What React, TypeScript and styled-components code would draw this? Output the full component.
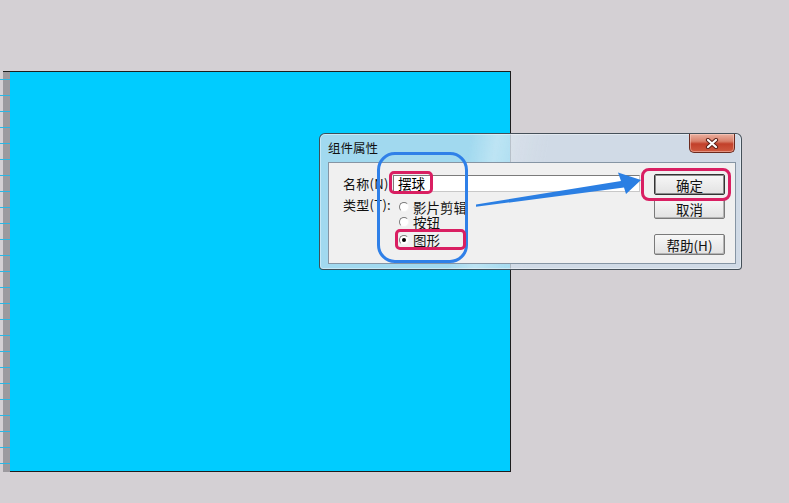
import styled, { createGlobalStyle } from 'styled-components';

const GlobalStyle = createGlobalStyle`
  html, body {
    margin: 0;
    padding: 0;
    background: #d4d0d4;
    font-family: 'Noto Sans CJK SC', 'Liberation Sans', sans-serif;
  }
`;

const RADIOS = [
  { label: '影片剪辑', checked: false },
  { label: '按钮', checked: false },
  { label: '图形', checked: true },
];

const App = () => {
  return (
    <Page>
      <GlobalStyle />
      <CanvasRow>
        <Ruler />
        <Stage />
      </CanvasRow>

      <Window>
        <TitleBar>
          <Title>组件属性</Title>
          <CloseButton>
            <svg width='14' height='11' viewBox='0 0 14 11'>
              <path d='M3 2 L11 9 M11 2 L3 9' stroke='#5b2219' strokeWidth='4.2' strokeLinecap='round' />
              <path d='M3 2 L11 9 M11 2 L3 9' stroke='#ffffff' strokeWidth='2.2' strokeLinecap='round' />
            </svg>
          </CloseButton>
        </TitleBar>
        <Client>
          <Fields>
            <FieldRow>
              <Label>名称(N):</Label>
              <TextBox>摆球</TextBox>
            </FieldRow>
            <FieldRow $top>
              <Label $raise>类型(T):</Label>
              <RadioGroup>
                {RADIOS.map((r, index) => (
                  <RadioRow key={index} $last={index === RADIOS.length - 1}>
                    <RadioCircle>{r.checked && <RadioDot />}</RadioCircle>
                    <span>{r.label}</span>
                  </RadioRow>
                ))}
              </RadioGroup>
            </FieldRow>
          </Fields>
          <ButtonColumn>
            <Button $primary>确定</Button>
            <Button>取消</Button>
            <Button $spaced>帮助(H)</Button>
          </ButtonColumn>
        </Client>
      </Window>

      {/* annotations drawn over the screenshot */}
      <BlueFrame />
      <PinkBox $left={389} $top={171} $w={44} $h={23} />
      <PinkBox $left={395} $top={229} $w={71} $h={21} />
      <PinkBox $left={641} $top={168} $w={90} $h={33} $radius={8} />
      <Arrow width='175' height='40' viewBox='0 0 175 40'>
        <polygon
          points='6,34.5 151,11 148,2.5 171,10 156,24 154,17.5 6,36.8'
          fill='#2b7fe3'
        />
      </Arrow>
    </Page>
  );
};

const Page = styled.div`
  position: relative;
  width: 789px;
  height: 503px;
  box-sizing: border-box;
  padding-top: 71px;
  overflow: hidden;
`;

const CanvasRow = styled.div`
  display: flex;
  width: 511px;
  height: 401px;
`;

const Ruler = styled.div`
  width: 10px;
  background:
    linear-gradient(#1d1d1d, #1d1d1d) 3px 0 / 7px 1px no-repeat,
    repeating-linear-gradient(
      180deg,
      transparent 0 8px,
      #2ab7e6 8px 9px,
      transparent 9px 16px
    ),
    linear-gradient(90deg, transparent 0 3px, #9c9a9f 3px 10px);
`;

const Stage = styled.div`
  flex: 1;
  background: #00ccff;
  border-top: 1px solid #1d1d1d;
  border-right: 1px solid #1d1d1d;
  border-bottom: 1px solid #1d1d1d;
`;

const Window = styled.div`
  position: absolute;
  left: 319px;
  top: 133px;
  width: 423px;
  height: 137px;
  box-sizing: border-box;
  display: flex;
  flex-direction: column;
  padding: 0 5px 5px 8px;
  border: 1px solid rgba(45, 55, 65, 0.85);
  border-radius: 6px 6px 4px 4px;
  background:
    linear-gradient(
      100deg,
      transparent 34%,
      rgba(255, 255, 255, 0.3) 40%,
      rgba(255, 255, 255, 0.1) 46%,
      transparent 52%
    ),
    rgba(206, 220, 234, 0.78);
  box-shadow: inset 0 0 0 1px rgba(255, 255, 255, 0.4);
`;

const TitleBar = styled.div`
  display: flex;
  align-items: flex-start;
  height: 28px;
  flex-shrink: 0;
`;

const Title = styled.span`
  margin-top: 7px;
  font-size: 12.5px;
  line-height: 14px;
  color: #111;
`;

const CloseButton = styled.div`
  margin-left: auto;
  margin-right: 1px;
  width: 46px;
  height: 19px;
  box-sizing: border-box;
  display: flex;
  align-items: center;
  justify-content: center;
  border: 1px solid #6b2a1e;
  border-top: none;
  border-radius: 0 0 5px 5px;
  background: linear-gradient(
    180deg,
    #eab0a0 0%,
    #d9806a 40%,
    #c2402a 55%,
    #cf5a40 100%
  );
  box-shadow: inset 0 0 0 1px rgba(255, 220, 210, 0.45);
`;

const Client = styled.div`
  flex: 1;
  display: flex;
  background: #f0f0f0;
  border: 1px solid #8695a4;
`;

const Fields = styled.div`
  display: flex;
  flex-direction: column;
  padding: 12px 0 0 14px;
`;

const FieldRow = styled.div<{ $top?: boolean }>`
  display: flex;
  align-items: ${(p) => (p.$top ? 'flex-start' : 'center')};
  margin-top: ${(p) => (p.$top ? '7px' : '0')};
`;

const Label = styled.span<{ $raise?: boolean }>`
  width: 50px;
  font-size: 13px;
  line-height: 16px;
  letter-spacing: 0.3px;
  color: #111;
  margin-top: ${(p) => (p.$raise ? '-2px' : '0')};
  white-space: nowrap;
`;

const TextBox = styled.div`
  width: 247px;
  height: 17px;
  box-sizing: border-box;
  padding-left: 4px;
  border: 1px solid #7b7b7b;
  border-right-color: #c8c8c8;
  border-bottom-color: #c8c8c8;
  background: #fff;
  font-size: 13.5px;
  line-height: 15px;
  color: #000;
`;

const RadioGroup = styled.div`
  display: flex;
  flex-direction: column;
  margin-left: 6px;
`;

const RadioRow = styled.div<{ $last?: boolean }>`
  display: flex;
  align-items: center;
  gap: 4px;
  height: 15px;
  line-height: 14px;
  margin-top: ${(p) => (p.$last ? '3px' : '0')};
  font-size: 13.5px;
  color: #111;
`;

const RadioCircle = styled.span`
  width: 10px;
  height: 10px;
  box-sizing: border-box;
  border-radius: 50%;
  border: 1px solid;
  border-color: #7a7a7a #f4f4f4 #f4f4f4 #7a7a7a;
  background: #fff;
  display: flex;
  align-items: center;
  justify-content: center;
`;

const RadioDot = styled.span`
  width: 4px;
  height: 4px;
  border-radius: 50%;
  background: #000;
`;

const ButtonColumn = styled.div`
  display: flex;
  flex-direction: column;
  margin-left: auto;
  margin-right: 10px;
  padding-top: 11px;
  width: 71px;
`;

const Button = styled.div<{ $primary?: boolean; $spaced?: boolean }>`
  height: 21px;
  box-sizing: border-box;
  display: flex;
  align-items: center;
  justify-content: center;
  margin-top: ${(p) => (p.$spaced ? '15px' : p.$primary ? '0' : '3px')};
  border: 1px solid ${(p) => (p.$primary ? '#333' : '#7a7a7a')};
  border-radius: 2px;
  background: linear-gradient(180deg, #f7f7f7, #e2e2e2);
  box-shadow: ${(p) =>
    p.$primary ? 'inset 0 0 0 1px #8c8c8c' : 'inset -1px -1px 0 #b4b4b4'};
  font-size: 13.5px;
  color: #111;
`;

const BlueFrame = styled.div`
  position: absolute;
  left: 377px;
  top: 152px;
  width: 91px;
  height: 111px;
  box-sizing: border-box;
  border: 3px solid #2f80e8;
  border-radius: 18px;
`;

const PinkBox = styled.div<{
  $left: number;
  $top: number;
  $w: number;
  $h: number;
  $radius?: number;
}>`
  position: absolute;
  left: ${(p) => p.$left}px;
  top: ${(p) => p.$top}px;
  width: ${(p) => p.$w}px;
  height: ${(p) => p.$h}px;
  box-sizing: border-box;
  border: 3px solid #d91f62;
  border-radius: ${(p) => p.$radius ?? 5}px;
`;

const Arrow = styled.svg`
  position: absolute;
  left: 470px;
  top: 170px;
`;

export default App;
